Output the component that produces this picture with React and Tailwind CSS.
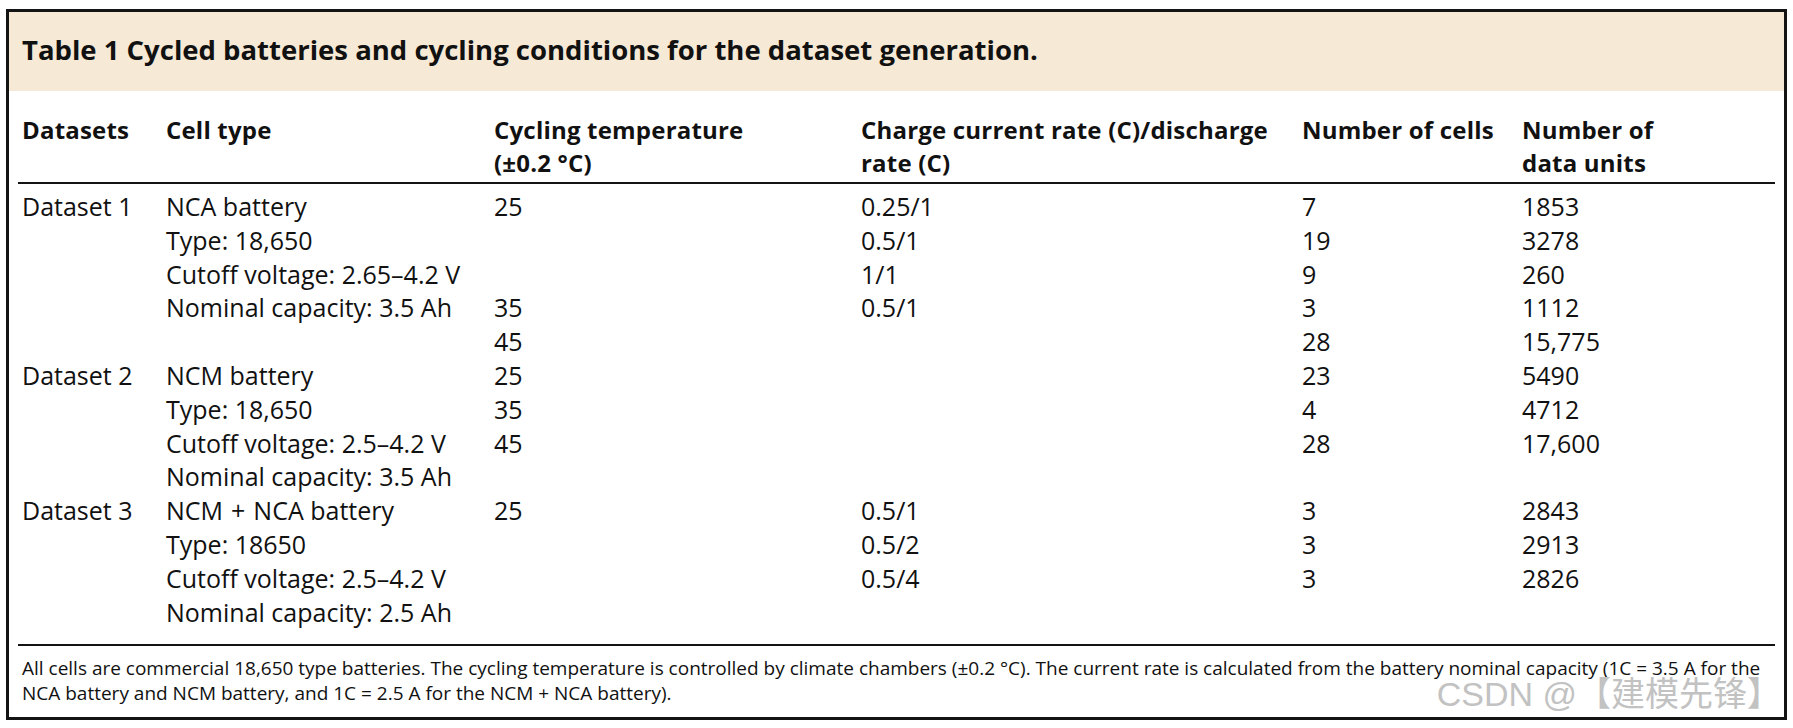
import React from "react";

const Plus = () => <span className="px-[8px]">+</span>;

const rows = [
  ["Dataset 1", "NCA battery", "25", "0.25/1", "7", "1853"],
  ["", "Type: 18,650", "", "0.5/1", "19", "3278"],
  ["", "Cutoff voltage: 2.65–4.2 V", "", "1/1", "9", "260"],
  ["", "Nominal capacity: 3.5 Ah", "35", "0.5/1", "3", "1112"],
  ["", "", "45", "", "28", "15,775"],
  ["Dataset 2", "NCM battery", "25", "", "23", "5490"],
  ["", "Type: 18,650", "35", "", "4", "4712"],
  ["", "Cutoff voltage: 2.5–4.2 V", "45", "", "28", "17,600"],
  ["", "Nominal capacity: 3.5 Ah", "", "", "", ""],
  ["Dataset 3", <>NCM<Plus />NCA battery</>, "25", "0.5/1", "3", "2843"],
  ["", "Type: 18650", "", "0.5/2", "3", "2913"],
  ["", "Cutoff voltage: 2.5–4.2 V", "", "0.5/4", "3", "2826"],
  ["", "Nominal capacity: 2.5 Ah", "", "", "", ""],
];

export default function App() {
  return (
    <div className="relative w-[1793px] h-[728px] bg-white overflow-hidden font-['Open_Sans',sans-serif] text-[#111]">
      <div className="ml-[6px] mt-[9px] w-[1781px] h-[711px] border-[3px] border-[#141414] flex flex-col">
        <div className="h-[79px] bg-[#f6e9d6] pl-[13px] pt-[22px]">
          <h1 className="text-[27.5px] leading-[32px] font-bold whitespace-nowrap">
            Table 1 Cycled batteries and cycling conditions for the dataset generation.
          </h1>
        </div>

        <div className="mx-[9px] pt-[22px] pb-[3px] border-b-2 border-[#141414]">
          <div className="grid grid-cols-[144px_328px_367px_441px_220px_1fr] pl-[4px] text-[24px] leading-[33px] font-bold tracking-[0.2px] whitespace-nowrap">
            <div>Datasets</div>
            <div>Cell type</div>
            <div>
              Cycling temperature
              <br />
              (±0.2 °C)
            </div>
            <div>
              Charge current rate (C)/discharge
              <br />
              rate (C)
            </div>
            <div>Number of cells</div>
            <div>
              Number of
              <br />
              data units
            </div>
          </div>
        </div>

        <div className="mx-[9px] pt-[6px] pb-[15px] border-b-2 border-[#141414]">
          {rows.map((r, i) => (
            <div
              key={i}
              className="grid grid-cols-[144px_328px_367px_441px_220px_1fr] pl-[4px] text-[25px] leading-[33.8px] h-[33.8px] whitespace-nowrap"
            >
              {r.map((c, j) => (
                <div key={j}>{c}</div>
              ))}
            </div>
          ))}
        </div>

        <div className="pl-[13px] pt-[10px] text-[19px] leading-[25px] whitespace-nowrap">
          All cells are commercial 18,650 type batteries. The cycling temperature is controlled by climate chambers (±0.2 °C). The current rate is calculated from the battery nominal capacity (1C = 3.5 A for the
          <br />
          NCA battery and NCM battery, and 1C = 2.5 A for the NCM + NCA battery).
        </div>
      </div>

      <div className="absolute right-[12px] top-[672px] text-[34px] leading-[44px] text-[#c2c2c2] font-['Liberation_Sans','Noto_Sans_CJK_SC',sans-serif] whitespace-nowrap">
        CSDN @【建模先锋】
      </div>
    </div>
  );
}
